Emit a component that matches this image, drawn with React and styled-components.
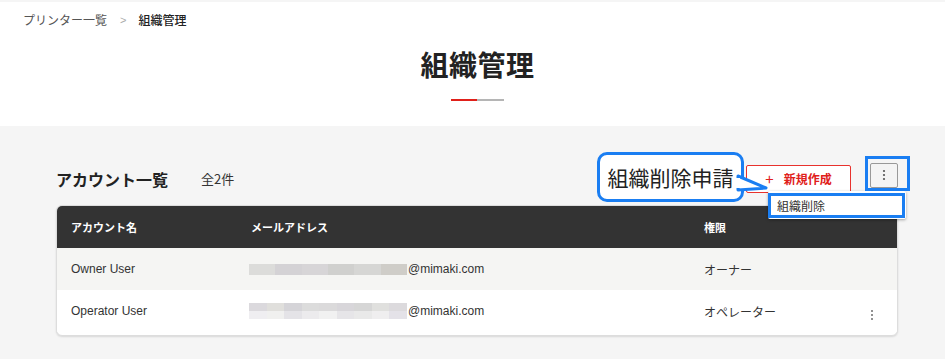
import React from 'react';
import styled, { createGlobalStyle } from 'styled-components';

const GlobalStyle = createGlobalStyle`
  html, body { margin: 0; padding: 0; }
  body {
    background: #f5f5f5;
    font-family: "Noto Sans CJK JP", "Liberation Sans", sans-serif;
    color: #333;
  }
`;

const BLUE = '#1a7ef2';

const Page = styled.div`
  width: 945px;
  height: 359px;
  overflow: hidden;
  position: relative;
  background: #f5f5f5;
`;

const Header = styled.header`
  margin-top: 2px;
  height: 124px;
  background: #fff;
  display: flex;
  flex-direction: column;
`;

const Breadcrumb = styled.nav`
  display: flex;
  align-items: center;
  gap: 11px;
  padding: 9px 0 0 23px;
  height: 18px;
  font-size: 12px;
  line-height: 18px;
`;

const Crumb = styled.span`
  color: ${p => (p.$current ? '#222' : '#555')};
  font-weight: ${p => (p.$current ? 500 : 400)};
`;

const Chevron = styled.span`
  color: #aaa;
  font-family: "Liberation Sans", sans-serif;
  font-size: 11px;
  margin: 0 1px 0 2px;
`;

const Title = styled.h1`
  margin: 15px 0 0;
  padding-left: 10px;
  text-align: center;
  font-size: 28px;
  font-weight: 700;
  letter-spacing: 0.5px;
  line-height: 40px;
  color: #222;
`;

const Underline = styled.div`
  display: flex;
  justify-content: center;
  padding-left: 10px;
  margin-top: 15px;
`;

const Bar = styled.span`
  width: ${p => p.$w}px;
  height: 2px;
  background: ${p => p.$color};
`;

const Section = styled.section`
  padding: 26px 47px 0 56px;
`;

const Toolbar = styled.div`
  height: 53px;
  display: flex;
  align-items: center;
`;

const ListTitle = styled.h2`
  margin: 0;
  font-size: 16px;
  font-weight: 700;
  color: #222;
`;

const Count = styled.span`
  margin-left: 33px;
  font-size: 13px;
  color: #333;
`;

const Actions = styled.div`
  margin-left: auto;
  display: flex;
  align-items: flex-start;
  gap: 19px;
  margin-top: -2px;
`;

const CreateButton = styled.button`
  width: 105px;
  height: 28px;
  margin-top: 2px;
  background: #fff;
  border: 1px solid #e8322d;
  border-radius: 2px;
  color: #e0201a;
  font-family: inherit;
  font-size: 12px;
  font-weight: 700;
  display: flex;
  align-items: center;
  justify-content: center;
  gap: 10px;
  padding: 0;
`;

const Plus = styled.span`
  font-size: 15px;
  font-weight: 400;
  margin-top: -1px;
`;

const KebabButton = styled.button`
  width: 28px;
  height: 25px;
  background: #f4f4f4;
  border: 1px solid #999;
  border-radius: 2px;
  display: flex;
  align-items: center;
  justify-content: center;
  padding: 0;
`;

const Table = styled.div`
  background: #fff;
  border: 1px solid #ddd;
  border-radius: 6px;
  overflow: hidden;
  box-shadow: 0 1px 2px rgba(0, 0, 0, 0.12);
  padding-bottom: 3px;
`;

const Row = styled.div`
  display: grid;
  grid-template-columns: 180px 453px 1fr 40px;
  align-items: center;
  height: 42px;
  padding-left: 14px;
  background: ${p => (p.$head ? '#333' : p.$shade ? '#f5f5f3' : '#fff')};
  color: ${p => (p.$head ? '#fff' : '#333')};
  font-size: ${p => (p.$head ? 11 : 12)}px;
  font-weight: ${p => (p.$head ? 700 : 400)};
`;

const Latin = styled.span`
  font-family: "Liberation Sans", sans-serif;
`;

const Email = styled.span`
  display: flex;
  align-items: center;
  font-family: "Liberation Sans", sans-serif;
  margin-left: -2px;
`;

const Blur = styled.span`
  display: grid;
  grid-template-columns: repeat(${p => p.$cols}, 1fr);
  grid-auto-rows: 1fr;
  width: 158px;
  height: ${p => p.$h}px;
  margin-right: 1px;
`;

const Cell = styled.span`
  background: ${p => p.$c};
`;

const DotsCell = styled.span`
  display: flex;
  justify-content: center;
  padding-right: 10px;
  margin-top: 8px;
`;

const Dots = ({ color = '#555', h = 12 }) => (
  <svg width="4" height={h} viewBox={`0 0 4 ${h}`}>
    <circle cx="2" cy={h / 2 - 4} r="1.1" fill={color} />
    <circle cx="2" cy={h / 2} r="1.1" fill={color} />
    <circle cx="2" cy={h / 2 + 4} r="1.1" fill={color} />
  </svg>
);

/* overlays: dropdown + annotation */

const Menu = styled.div`
  position: absolute;
  left: 768px;
  top: 191px;
  width: 138px;
  height: 28px;
  background: #fff;
  border-radius: 2px;
  box-shadow: 0 1px 3px rgba(0, 0, 0, 0.35);
`;

const MenuItem = styled.div`
  position: absolute;
  left: 0;
  top: 2px;
  width: 125px;
  height: 19px;
  border: 3px solid ${BLUE};
  display: flex;
  align-items: center;
  padding-left: 6px;
  font-size: 12px;
  color: #333;
`;

const Highlight = styled.div`
  position: absolute;
  left: 865px;
  top: 156px;
  width: 39px;
  height: 29px;
  border: 3px solid ${BLUE};
`;

const Callout = styled.div`
  position: absolute;
  left: 597px;
  top: 152px;
  width: 141px;
  height: 44px;
  border: 3px solid ${BLUE};
  border-radius: 10px;
  background: #fff;
  display: flex;
  align-items: center;
  justify-content: center;
  font-size: 21px;
  color: #222;
`;

const Tail = styled.svg`
  position: absolute;
  left: 736px;
  top: 168px;
  overflow: visible;
`;

const row1 = ['#dcdcda', '#d4d2d5', '#d7d5d7', '#d0d0ce', '#d6d6d4', '#cfcdc8'];
const row2 = [
  '#dbd9dd', '#e0dfdc', '#d5d4d8', '#dcdcdc', '#dbdadb', '#d8d6da', '#d6d6d6', '#e0e0de', '#dcdadd',
  '#efeef1', '#f0f0ef', '#e4e3e7', '#ecebed', '#f1f1f1', '#e6e5e8', '#e9e9e9', '#efeeef', '#e4e2e8',
];

export default function App() {
  return (
    <Page>
      <GlobalStyle />
      <Header>
        <Breadcrumb>
          <Crumb>プリンター一覧</Crumb>
          <Chevron>&gt;</Chevron>
          <Crumb $current>組織管理</Crumb>
        </Breadcrumb>
        <Title>組織管理</Title>
        <Underline>
          <Bar $w={26} $color="#e0201a" />
          <Bar $w={27} $color="#b5b5b5" />
        </Underline>
      </Header>

      <Section>
        <Toolbar>
          <ListTitle>アカウント一覧</ListTitle>
          <Count>全2件</Count>
          <Actions>
            <CreateButton>
              <Plus>+</Plus>新規作成
            </CreateButton>
            <KebabButton>
              <Dots />
            </KebabButton>
          </Actions>
        </Toolbar>

        <Table>
          <Row $head>
            <span>アカウント名</span>
            <span>メールアドレス</span>
            <span>権限</span>
            <span />
          </Row>
          <Row $shade>
            <Latin>Owner User</Latin>
            <Email>
              <Blur $cols={6} $h={11}>
                {row1.map((c, i) => <Cell key={i} $c={c} />)}
              </Blur>
              @mimaki.com
            </Email>
            <span>オーナー</span>
            <span />
          </Row>
          <Row>
            <Latin>Operator User</Latin>
            <Email>
              <Blur $cols={9} $h={16}>
                {row2.map((c, i) => <Cell key={i} $c={c} />)}
              </Blur>
              @mimaki.com
            </Email>
            <span>オペレーター</span>
            <DotsCell>
              <Dots color="#777" />
            </DotsCell>
          </Row>
        </Table>
      </Section>

      <Menu>
        <MenuItem>組織削除</MenuItem>
      </Menu>
      <Highlight />
      <Callout>組織削除申請</Callout>
      <Tail width="32" height="24">
        <path d="M2 8 L30 20 L2 22 Z" fill="#fff" stroke={BLUE} strokeWidth="3" strokeLinejoin="round" />
        <rect x="0" y="10" width="4" height="10" fill="#fff" />
      </Tail>
    </Page>
  );
}
